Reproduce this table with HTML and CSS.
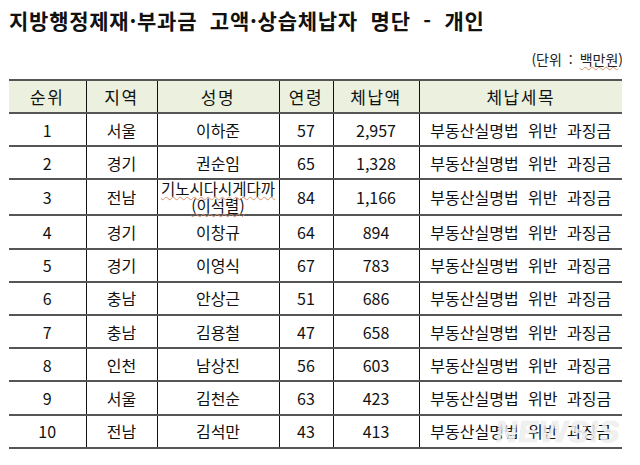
FILE: index.html
```html
<!DOCTYPE html>
<html lang="ko">
<head>
<meta charset="utf-8">
<link rel="stylesheet" href="styles.css">
</head>
<body>
<div class="page">
  <h1 class="title">지방행정제재·부과금 고액·상습체납자 명단 - 개인</h1>
  <div class="unit">(단위 : <span class="spell">백만원</span>)</div>
  <div class="table-wrap">
  <table class="list">
    <colgroup>
      <col class="c1"><col class="c2"><col class="c3"><col class="c4"><col class="c5"><col class="c6">
    </colgroup>
    <thead>
      <tr><th>순위</th><th>지역</th><th>성명</th><th>연령</th><th>체납액</th><th>체납세목</th></tr>
    </thead>
    <tbody>
      <tr><td>1</td><td>서울</td><td>이하준</td><td>57</td><td>2,957</td><td>부동산실명법 위반 과징금</td></tr>
      <tr><td>2</td><td>경기</td><td>권순임</td><td>65</td><td>1,328</td><td>부동산실명법 위반 과징금</td></tr>
      <tr><td>3</td><td>전남</td><td class="two"><div class="ln"><span class="spell">기노시다시게다까</span></div><div class="ln"><span class="spell">(이석렬)</span></div></td><td>84</td><td>1,166</td><td>부동산실명법 위반 과징금</td></tr>
      <tr><td>4</td><td>경기</td><td>이창규</td><td>64</td><td>894</td><td>부동산실명법 위반 과징금</td></tr>
      <tr><td>5</td><td>경기</td><td>이영식</td><td>67</td><td>783</td><td>부동산실명법 위반 과징금</td></tr>
      <tr><td>6</td><td>충남</td><td>안상근</td><td>51</td><td>686</td><td>부동산실명법 위반 과징금</td></tr>
      <tr><td>7</td><td>충남</td><td>김용철</td><td>47</td><td>658</td><td>부동산실명법 위반 과징금</td></tr>
      <tr><td>8</td><td>인천</td><td>남상진</td><td>56</td><td>603</td><td>부동산실명법 위반 과징금</td></tr>
      <tr><td>9</td><td>서울</td><td>김천순</td><td>63</td><td>423</td><td>부동산실명법 위반 과징금</td></tr>
      <tr><td>10</td><td>전남</td><td>김석만</td><td>43</td><td>413</td><td>부동산실명법 위반 과징금</td></tr>
    </tbody>
  </table>
  <div class="watermark">NEWSIS</div>
  </div>
</div>
</body>
</html>
```
FILE: styles.css
```css
* { box-sizing: border-box; }
html, body { margin: 0; padding: 0; background: #fff; }
body {
  font-family: "Noto Sans CJK KR", "Noto Sans", sans-serif;
  color: #111;
}
.page {
  width: 640px;
  height: 465px;
  padding: 6px 0 0 9px;
  overflow: hidden;
}
.title {
  margin: 0;
  font-size: 21px;
  font-weight: 700;
  line-height: 28px;
  letter-spacing: 0.75px;
  word-spacing: 6px;
  color: #111;
}
.unit {
  width: 614px;
  margin-top: 15px;
  text-align: right;
  font-size: 14px;
  line-height: 20px;
  word-spacing: 3px;
  color: #222;
}
.spell {
  text-decoration: underline wavy #d7926e;
  text-decoration-thickness: 1px;
  text-underline-offset: 1px;
}
.table-wrap {
  position: relative;
  width: 613px;
  margin-top: 10px;
}
.list {
  width: 613px;
  border-collapse: collapse;
  table-layout: fixed;
  font-size: 16px;
}
.c1 { width: 77px; }
.c2 { width: 71px; }
.c3 { width: 122px; }
.c4 { width: 54px; }
.c5 { width: 86px; }
.c6 { width: 203px; }
.list th, .list td {
  text-align: center;
  padding: 0;
  border-top: 2px solid #555;
  border-bottom: 2px solid #555;
  border-left: 1px solid #111;
  border-right: 1px solid #111;
  font-weight: 400;
  white-space: nowrap;
}
.list th:first-child, .list td:first-child { border-left: none; }
.list th:last-child, .list td:last-child { border-right: none; }
.list th {
  background: #ebf1de;
  height: 33px;
  font-size: 17px;
  letter-spacing: 1.5px;
}
.list td {
  height: 33.2px;
  line-height: 18px;
}
.list td.two {
  font-size: 15.5px;
}
.list td.two .ln {
  height: 17px;
  line-height: 17px;
}
.list td:last-child { word-spacing: 5px; }
.watermark {
  position: absolute;
  right: 2px;
  bottom: 2px;
  font-family: "Liberation Sans", sans-serif;
  font-weight: 700;
  font-size: 30px;
  line-height: 30px;
  transform: skewX(-8deg);
  color: rgba(255,255,255,0.72);
  text-shadow: 0 0 1px rgba(150,150,150,0.5);
  letter-spacing: 1px;
}
```
